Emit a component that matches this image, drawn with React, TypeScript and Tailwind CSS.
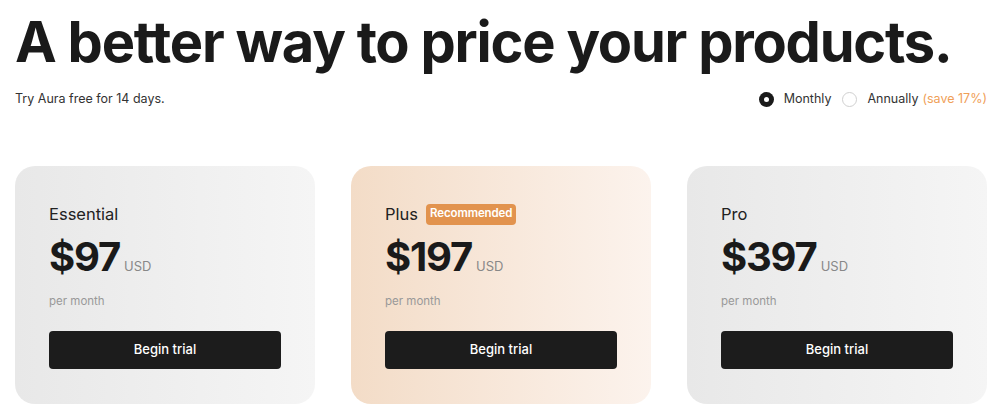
import React from "react";

const plans = [
  { name: "Essential", price: "$97", featured: false },
  { name: "Plus", price: "$197", featured: true },
  { name: "Pro", price: "$397", featured: false },
];

function PlanCard({ name, price, featured }: { name: string; price: string; featured: boolean }) {
  return (
    <div
      className={
        "flex flex-col rounded-[20px] p-[34px] pt-[36px] pb-[35px] " +
        (featured
          ? "bg-gradient-to-r from-[#f3dcc7] to-[#fcf3ed]"
          : "bg-gradient-to-r from-[#e8e8e8] to-[#f5f5f5]")
      }
    >
      <div className="flex h-6 items-center gap-2">
        <span className="text-[16.5px] leading-6 text-[#222]">{name}</span>
        {featured && (
          <span className="flex h-[21px] items-center rounded-[4px] bg-[#e2934e] px-[4px] text-[11.5px] font-semibold tracking-[-0.01em] text-white">
            Recommended
          </span>
        )}
      </div>
      <div className="mt-[11px] flex items-baseline gap-1">
        <span className="text-[40px] font-bold leading-10 tracking-[-0.03em] text-[#1a1a1a]">{price}</span>
        <span className="text-[13px] text-[#888]">USD</span>
      </div>
      <div className="mt-[16px] text-[11.5px] leading-4 text-[#999]">per month</div>
      <button className="mt-[22px] h-[38px] w-full rounded-[4px] bg-[#1c1c1c] pb-[1px] text-[13px] font-medium text-white">
        Begin trial
      </button>
    </div>
  );
}

export default function App() {
  return (
    <main className="min-h-screen bg-white pl-[15px] pr-[13px] pt-[14px] font-['Inter',sans-serif] text-[#1a1a1a]">
      <h1 className="text-[56px] font-bold leading-[56px] tracking-[-0.022em]">
        A better way to price your products.
      </h1>

      <div className="mt-[19px] flex h-5 items-center justify-between text-[12.5px] text-[#333]">
        <span>Try Aura free for 14 days.</span>
        <div className="flex items-center">
          <span className="flex h-[15px] w-[15px] items-center justify-center rounded-full bg-[#1a1a1a]">
            <span className="h-[5px] w-[5px] rounded-full bg-white" />
          </span>
          <span className="ml-[10px]">Monthly</span>
          <span className="ml-[11px] h-[15px] w-[15px] rounded-full border border-[#d0d0d0] bg-white" />
          <span className="ml-[10px]">Annually</span>
          <span className="ml-1 text-[#f0a058]">(save 17%)</span>
        </div>
      </div>

      <section className="mt-[57px] grid grid-cols-3 gap-[36px]">
        {plans.map((p) => (
          <PlanCard key={p.name} {...p} />
        ))}
      </section>
    </main>
  );
}
